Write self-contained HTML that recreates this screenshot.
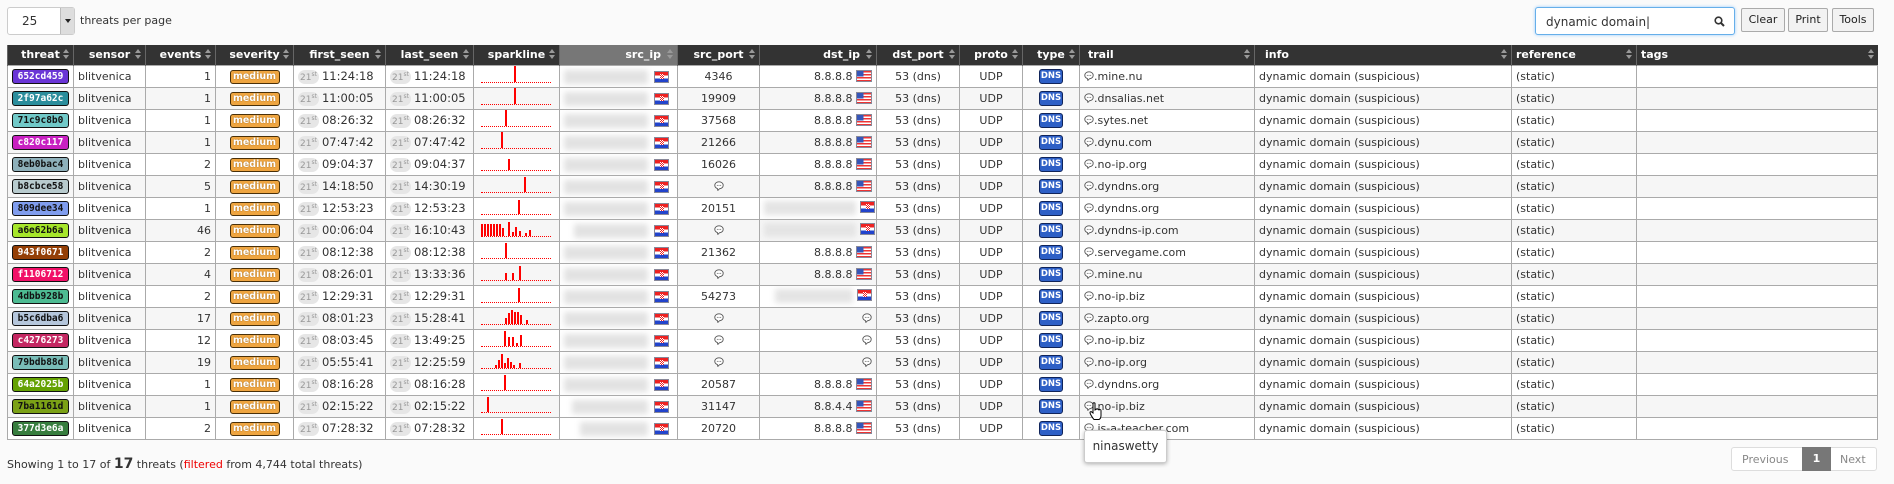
<!DOCTYPE html>
<html><head><meta charset="utf-8"><style>
*{box-sizing:border-box}
body{margin:0;width:1894px;height:484px;background:#fafafa;font-family:"DejaVu Sans","Liberation Sans",sans-serif;font-size:11px;color:#333;position:relative;overflow:hidden}
.sel{position:absolute;left:7px;top:7px;width:68px;height:28px;border:1px solid #ccc;border-radius:3px;background:#fff}
.sel span{position:absolute;left:14px;top:6px;font-size:12px}
.sel i{position:absolute;right:0;top:0;width:14px;height:26px;background:#ddd;border-left:1px solid #bbb}
.sel i:after{content:"";position:absolute;left:4px;top:11px;border:3px solid transparent;border-top:4px solid #222}
.tpp{position:absolute;left:80px;top:14px;font-size:11px}
.search{position:absolute;left:1535px;top:7px;width:200px;height:28px;border:1px solid #66afe9;border-radius:3px;background:#fff;box-shadow:0 0 3px #9cf}
.search span{position:absolute;left:10px;top:7px;font-size:12px;color:#333}
.btn{position:absolute;top:8px;height:24px;border:1px solid #aaa;border-radius:2px;background:#f2f2f2;font-size:11px;text-align:center;line-height:22px;color:#222}
table{position:absolute;left:7px;top:45px;border-collapse:collapse;table-layout:fixed;width:1870px}
th{background:#333;color:#fff;font-weight:bold;height:20px;padding:0 4px;font-size:11px;border-left:1px solid #666;position:relative;text-align:center;white-space:nowrap}
th .ar{position:absolute;right:3px;top:4px;width:7px;height:12px}
th .ar:before{content:"";position:absolute;left:0;top:0;border:3.5px solid transparent;border-bottom:4px solid #999;border-top:0}
th .ar:after{content:"";position:absolute;left:0;top:6px;border:3.5px solid transparent;border-top:4px solid #999;border-bottom:0}
th.l{text-align:left}th.r{text-align:right;padding-right:16px}
td{height:22px;border:1px solid #aaa;padding:0 4px;white-space:nowrap;overflow:hidden;font-size:11px;position:relative}
tr:nth-child(odd) td{background:#f6f6f6}tr:nth-child(even) td{background:#fff}
.c{text-align:center}.r{text-align:right}
.tm{font-size:11.5px}
.tb{display:inline-block;width:57px;height:15px;border:1px solid #111;border-radius:3px;font:bold 9.5px "DejaVu Sans Mono",monospace;line-height:13px;text-align:center;color:#fff}
.tb.d{color:#111}
.sv{display:inline-block;width:50px;height:14px;border:1px solid #4a3008;border-radius:3px;background:#efa540;color:#fff;font-size:9.5px;font-weight:bold;line-height:12px;text-shadow:0 0 1px #7a5010}
.dt{display:inline-block;background:#e6e6e6;color:#999;border-radius:7px;font-size:9px;padding:1px 2px;margin-right:3px}
.dt sup{font-size:6px}
.sp{position:absolute;left:7px;right:8px;bottom:4px;height:16px;border-bottom:1px dotted #f00}
.sp b{position:absolute;bottom:0;width:2px;background:#f00}
td.ip{background:#fff!important;padding:0}
.bl{position:absolute;left:4px;top:4px;width:84px;height:14px;background:#e2e2e2;filter:blur(3px)}
.hr{position:absolute;right:8px;top:5px;width:15px;height:12px;background:linear-gradient(#e22 0,#e22 33%,#fff 33%,#fff 66%,#24c 66%);border:1px solid #889}
.hr:after,.hf:after{content:"";position:absolute;left:5px;top:2px;width:4px;height:5px;background:repeating-conic-gradient(#e22 0 25%,#fff 0 50%) 0 0/2px 2px}
.us{display:inline-block;vertical-align:-2px;width:16px;height:12px;border:1px solid #889;background:linear-gradient(90deg,#3656b8 0,#3656b8 45%,transparent 45%) 0 0/100% 55% no-repeat,repeating-linear-gradient(#e33 0 1.5px,#fff 1.5px 3px)}
.hf{display:inline-block;position:relative;vertical-align:-2px;width:15px;height:12px;border:1px solid #889;background:linear-gradient(#e22 0,#e22 33%,#fff 33%,#fff 66%,#24c 66%)}
.dns{display:inline-block;width:24px;height:15px;background:#2d5fc6;border:1px solid #10245a;border-radius:3px;color:#fff;font-size:8.5px;font-weight:bold;line-height:13px;text-align:center}
.cm{display:inline-block;width:10px;height:10px;vertical-align:-1px}
.dbl{display:inline-block;width:92px;height:14px;background:#e4e4e4;filter:blur(3px);vertical-align:middle;margin-right:4px}
</style></head><body>
<div class="sel"><span>25</span><i></i></div>
<div class="tpp">threats per page</div>
<div class="search"><span>dynamic domain|</span><svg style="position:absolute;right:9px;top:8px" width="11" height="11" viewBox="0 0 11 11"><circle cx="4.5" cy="4.5" r="3.3" fill="none" stroke="#333" stroke-width="1.6"/><path d="M7 7l3 3" stroke="#333" stroke-width="2"/></svg></div>
<div class="btn" style="left:1741px;width:44px">Clear</div>
<div class="btn" style="left:1788px;width:40px">Print</div>
<div class="btn" style="left:1832px;width:42px">Tools</div>
<svg width="0" height="0" style="position:absolute"><defs><symbol id="cm" viewBox="0 0 10 10"><path d="M5 .8C2.6.8.8 2.3.8 4.3c0 1.6 1.1 2.8 2.6 3.3L3.9 9.4 5.4 7.8C7.6 7.7 9.2 6.2 9.2 4.3 9.2 2.3 7.4.8 5 .8z" fill="#fff" stroke="#555" stroke-width=".9"/><circle cx="3.3" cy="4.4" r=".5" fill="#555"/><circle cx="5" cy="4.4" r=".5" fill="#555"/><circle cx="6.7" cy="4.4" r=".5" fill="#555"/></symbol></defs></svg>
<table>
<colgroup><col style="width:66px"><col style="width:72px"><col style="width:70px"><col style="width:78px"><col style="width:92px"><col style="width:88px"><col style="width:86px"><col style="width:118px"><col style="width:82px"><col style="width:117px"><col style="width:83px"><col style="width:63px"><col style="width:57px"><col style="width:175px"><col style="width:257px"><col style="width:125px"><col style="width:241px"></colgroup>
<tr><th>threat<i class="ar"></i></th><th>sensor<i class="ar"></i></th><th>events<i class="ar"></i></th><th>severity<i class="ar"></i></th><th>first_seen<i class="ar"></i></th><th>last_seen<i class="ar"></i></th><th>sparkline<i class="ar"></i></th><th class="r" style="background:#777">src_ip<i class="ar"></i></th><th>src_port<i class="ar"></i></th><th class="r">dst_ip<i class="ar"></i></th><th>dst_port<i class="ar"></i></th><th>proto<i class="ar"></i></th><th>type<i class="ar"></i></th><th class="l" style="padding-left:8px">trail<i class="ar"></i></th><th class="l" style="padding-left:10px">info<i class="ar"></i></th><th class="l">reference<i class="ar"></i></th><th class="l">tags<i class="ar"></i></th></tr>
<tr><td class="c"><span class="tb" style="background:#6a35d6">652cd459</span></td><td>blitvenica</td><td class="r">1</td><td class="c"><span class="sv">medium</span></td><td class="tm"><span class="dt">21<sup>st</sup></span>11:24:18</td><td class="tm"><span class="dt">21<sup>st</sup></span>11:24:18</td><td><div class="sp"><b style="left:33px;height:16px"></b></div></td><td class="ip"><div class="bl"></div><div class="hr"></div></td><td class="c">4346</td><td class="r">8.8.8.8 <span class="us"></span></td><td class="c">53 (dns)</td><td class="c">UDP</td><td class="c"><span class="dns">DNS</span></td><td><svg class="cm"><use href="#cm"/></svg>.mine.nu</td><td>dynamic domain (suspicious)</td><td>(static)</td><td></td></tr>
<tr><td class="c"><span class="tb" style="background:#2a8d9c">2f97a62c</span></td><td>blitvenica</td><td class="r">1</td><td class="c"><span class="sv">medium</span></td><td class="tm"><span class="dt">21<sup>st</sup></span>11:00:05</td><td class="tm"><span class="dt">21<sup>st</sup></span>11:00:05</td><td><div class="sp"><b style="left:33px;height:16px"></b></div></td><td class="ip"><div class="bl"></div><div class="hr"></div></td><td class="c">19909</td><td class="r">8.8.8.8 <span class="us"></span></td><td class="c">53 (dns)</td><td class="c">UDP</td><td class="c"><span class="dns">DNS</span></td><td><svg class="cm"><use href="#cm"/></svg>.dnsalias.net</td><td>dynamic domain (suspicious)</td><td>(static)</td><td></td></tr>
<tr><td class="c"><span class="tb d" style="background:#71c9c8">71c9c8b0</span></td><td>blitvenica</td><td class="r">1</td><td class="c"><span class="sv">medium</span></td><td class="tm"><span class="dt">21<sup>st</sup></span>08:26:32</td><td class="tm"><span class="dt">21<sup>st</sup></span>08:26:32</td><td><div class="sp"><b style="left:24px;height:16px"></b></div></td><td class="ip"><div class="bl"></div><div class="hr"></div></td><td class="c">37568</td><td class="r">8.8.8.8 <span class="us"></span></td><td class="c">53 (dns)</td><td class="c">UDP</td><td class="c"><span class="dns">DNS</span></td><td><svg class="cm"><use href="#cm"/></svg>.sytes.net</td><td>dynamic domain (suspicious)</td><td>(static)</td><td></td></tr>
<tr><td class="c"><span class="tb" style="background:#c820c1">c820c117</span></td><td>blitvenica</td><td class="r">1</td><td class="c"><span class="sv">medium</span></td><td class="tm"><span class="dt">21<sup>st</sup></span>07:47:42</td><td class="tm"><span class="dt">21<sup>st</sup></span>07:47:42</td><td><div class="sp"><b style="left:20px;height:16px"></b></div></td><td class="ip"><div class="bl"></div><div class="hr"></div></td><td class="c">21266</td><td class="r">8.8.8.8 <span class="us"></span></td><td class="c">53 (dns)</td><td class="c">UDP</td><td class="c"><span class="dns">DNS</span></td><td><svg class="cm"><use href="#cm"/></svg>.dynu.com</td><td>dynamic domain (suspicious)</td><td>(static)</td><td></td></tr>
<tr><td class="c"><span class="tb d" style="background:#8eb0ba">8eb0bac4</span></td><td>blitvenica</td><td class="r">2</td><td class="c"><span class="sv">medium</span></td><td class="tm"><span class="dt">21<sup>st</sup></span>09:04:37</td><td class="tm"><span class="dt">21<sup>st</sup></span>09:04:37</td><td><div class="sp"><b style="left:27px;height:11px"></b></div></td><td class="ip"><div class="bl"></div><div class="hr"></div></td><td class="c">16026</td><td class="r">8.8.8.8 <span class="us"></span></td><td class="c">53 (dns)</td><td class="c">UDP</td><td class="c"><span class="dns">DNS</span></td><td><svg class="cm"><use href="#cm"/></svg>.no-ip.org</td><td>dynamic domain (suspicious)</td><td>(static)</td><td></td></tr>
<tr><td class="c"><span class="tb d" style="background:#b8cbce">b8cbce58</span></td><td>blitvenica</td><td class="r">5</td><td class="c"><span class="sv">medium</span></td><td class="tm"><span class="dt">21<sup>st</sup></span>14:18:50</td><td class="tm"><span class="dt">21<sup>st</sup></span>14:30:19</td><td><div class="sp"><b style="left:43px;height:15px"></b></div></td><td class="ip"><div class="bl"></div><div class="hr"></div></td><td class="c"><svg class="cm"><use href="#cm"/></svg></td><td class="r">8.8.8.8 <span class="us"></span></td><td class="c">53 (dns)</td><td class="c">UDP</td><td class="c"><span class="dns">DNS</span></td><td><svg class="cm"><use href="#cm"/></svg>.dyndns.org</td><td>dynamic domain (suspicious)</td><td>(static)</td><td></td></tr>
<tr><td class="c"><span class="tb d" style="background:#809dee">809dee34</span></td><td>blitvenica</td><td class="r">1</td><td class="c"><span class="sv">medium</span></td><td class="tm"><span class="dt">21<sup>st</sup></span>12:53:23</td><td class="tm"><span class="dt">21<sup>st</sup></span>12:53:23</td><td><div class="sp"><b style="left:37px;height:14px"></b></div></td><td class="ip"><div class="bl"></div><div class="hr"></div></td><td class="c">20151</td><td class="r"><span class="dbl"></span><span class="hf"></span></td><td class="c">53 (dns)</td><td class="c">UDP</td><td class="c"><span class="dns">DNS</span></td><td><svg class="cm"><use href="#cm"/></svg>.dyndns.org</td><td>dynamic domain (suspicious)</td><td>(static)</td><td></td></tr>
<tr><td class="c"><span class="tb d" style="background:#a6e62b">a6e62b6a</span></td><td>blitvenica</td><td class="r">46</td><td class="c"><span class="sv">medium</span></td><td class="tm"><span class="dt">21<sup>st</sup></span>00:06:04</td><td class="tm"><span class="dt">21<sup>st</sup></span>16:10:43</td><td><div class="sp"><b style="left:0;height:12px"></b><b style="left:3px;height:12px"></b><b style="left:6px;height:12px"></b><b style="left:9px;height:12px"></b><b style="left:12px;height:12px"></b><b style="left:15px;height:12px"></b><b style="left:18px;height:12px"></b><b style="left:21px;height:8px"></b><b style="left:27px;height:14px"></b><b style="left:31px;height:4px"></b><b style="left:34px;height:9px"></b><b style="left:38px;height:5px"></b><b style="left:44px;height:3px"></b><b style="left:48px;height:6px"></b></div></td><td class="ip"><div class="bl" style="left:14px;width:74px"></div><div class="hr"></div></td><td class="c"><svg class="cm"><use href="#cm"/></svg></td><td class="r"><span class="dbl"></span><span class="hf"></span></td><td class="c">53 (dns)</td><td class="c">UDP</td><td class="c"><span class="dns">DNS</span></td><td><svg class="cm"><use href="#cm"/></svg>.dyndns-ip.com</td><td>dynamic domain (suspicious)</td><td>(static)</td><td></td></tr>
<tr><td class="c"><span class="tb" style="background:#943f06">943f0671</span></td><td>blitvenica</td><td class="r">2</td><td class="c"><span class="sv">medium</span></td><td class="tm"><span class="dt">21<sup>st</sup></span>08:12:38</td><td class="tm"><span class="dt">21<sup>st</sup></span>08:12:38</td><td><div class="sp"><b style="left:24px;height:15px"></b></div></td><td class="ip"><div class="bl"></div><div class="hr"></div></td><td class="c">21362</td><td class="r">8.8.8.8 <span class="us"></span></td><td class="c">53 (dns)</td><td class="c">UDP</td><td class="c"><span class="dns">DNS</span></td><td><svg class="cm"><use href="#cm"/></svg>.servegame.com</td><td>dynamic domain (suspicious)</td><td>(static)</td><td></td></tr>
<tr><td class="c"><span class="tb" style="background:#f11067">f1106712</span></td><td>blitvenica</td><td class="r">4</td><td class="c"><span class="sv">medium</span></td><td class="tm"><span class="dt">21<sup>st</sup></span>08:26:01</td><td class="tm"><span class="dt">21<sup>st</sup></span>13:33:36</td><td><div class="sp"><b style="left:24px;height:7px"></b><b style="left:31px;height:7px"></b><b style="left:38px;height:14px"></b></div></td><td class="ip"><div class="bl"></div><div class="hr"></div></td><td class="c"><svg class="cm"><use href="#cm"/></svg></td><td class="r">8.8.8.8 <span class="us"></span></td><td class="c">53 (dns)</td><td class="c">UDP</td><td class="c"><span class="dns">DNS</span></td><td><svg class="cm"><use href="#cm"/></svg>.mine.nu</td><td>dynamic domain (suspicious)</td><td>(static)</td><td></td></tr>
<tr><td class="c"><span class="tb d" style="background:#4dbb92">4dbb928b</span></td><td>blitvenica</td><td class="r">2</td><td class="c"><span class="sv">medium</span></td><td class="tm"><span class="dt">21<sup>st</sup></span>12:29:31</td><td class="tm"><span class="dt">21<sup>st</sup></span>12:29:31</td><td><div class="sp"><b style="left:37px;height:14px"></b></div></td><td class="ip"><div class="bl"></div><div class="hr"></div></td><td class="c">54273</td><td class="r"><span class="dbl" style="width:78px"></span><span class="hf"></span></td><td class="c">53 (dns)</td><td class="c">UDP</td><td class="c"><span class="dns">DNS</span></td><td><svg class="cm"><use href="#cm"/></svg>.no-ip.biz</td><td>dynamic domain (suspicious)</td><td>(static)</td><td></td></tr>
<tr><td class="c"><span class="tb d" style="background:#b5c6db">b5c6dba6</span></td><td>blitvenica</td><td class="r">17</td><td class="c"><span class="sv">medium</span></td><td class="tm"><span class="dt">21<sup>st</sup></span>08:01:23</td><td class="tm"><span class="dt">21<sup>st</sup></span>15:28:41</td><td><div class="sp"><b style="left:24px;height:6px"></b><b style="left:27px;height:11px"></b><b style="left:30px;height:14px"></b><b style="left:33px;height:12px"></b><b style="left:36px;height:12px"></b><b style="left:39px;height:9px"></b><b style="left:45px;height:4px"></b></div></td><td class="ip"><div class="bl"></div><div class="hr"></div></td><td class="c"><svg class="cm"><use href="#cm"/></svg></td><td class="r"><svg class="cm"><use href="#cm"/></svg></td><td class="c">53 (dns)</td><td class="c">UDP</td><td class="c"><span class="dns">DNS</span></td><td><svg class="cm"><use href="#cm"/></svg>.zapto.org</td><td>dynamic domain (suspicious)</td><td>(static)</td><td></td></tr>
<tr><td class="c"><span class="tb" style="background:#c42762">c4276273</span></td><td>blitvenica</td><td class="r">12</td><td class="c"><span class="sv">medium</span></td><td class="tm"><span class="dt">21<sup>st</sup></span>08:03:45</td><td class="tm"><span class="dt">21<sup>st</sup></span>13:49:25</td><td><div class="sp"><b style="left:23px;height:15px"></b><b style="left:27px;height:9px"></b><b style="left:31px;height:9px"></b><b style="left:35px;height:3px"></b><b style="left:39px;height:11px"></b></div></td><td class="ip"><div class="bl"></div><div class="hr"></div></td><td class="c"><svg class="cm"><use href="#cm"/></svg></td><td class="r"><svg class="cm"><use href="#cm"/></svg></td><td class="c">53 (dns)</td><td class="c">UDP</td><td class="c"><span class="dns">DNS</span></td><td><svg class="cm"><use href="#cm"/></svg>.no-ip.biz</td><td>dynamic domain (suspicious)</td><td>(static)</td><td></td></tr>
<tr><td class="c"><span class="tb d" style="background:#79bdb8">79bdb88d</span></td><td>blitvenica</td><td class="r">19</td><td class="c"><span class="sv">medium</span></td><td class="tm"><span class="dt">21<sup>st</sup></span>05:55:41</td><td class="tm"><span class="dt">21<sup>st</sup></span>12:25:59</td><td><div class="sp"><b style="left:14px;height:3px"></b><b style="left:17px;height:8px"></b><b style="left:20px;height:14px"></b><b style="left:23px;height:5px"></b><b style="left:26px;height:10px"></b><b style="left:29px;height:6px"></b><b style="left:32px;height:3px"></b><b style="left:38px;height:5px"></b></div></td><td class="ip"><div class="bl"></div><div class="hr"></div></td><td class="c"><svg class="cm"><use href="#cm"/></svg></td><td class="r"><svg class="cm"><use href="#cm"/></svg></td><td class="c">53 (dns)</td><td class="c">UDP</td><td class="c"><span class="dns">DNS</span></td><td><svg class="cm"><use href="#cm"/></svg>.no-ip.org</td><td>dynamic domain (suspicious)</td><td>(static)</td><td></td></tr>
<tr><td class="c"><span class="tb" style="background:#64a202">64a2025b</span></td><td>blitvenica</td><td class="r">1</td><td class="c"><span class="sv">medium</span></td><td class="tm"><span class="dt">21<sup>st</sup></span>08:16:28</td><td class="tm"><span class="dt">21<sup>st</sup></span>08:16:28</td><td><div class="sp"><b style="left:23px;height:15px"></b></div></td><td class="ip"><div class="bl"></div><div class="hr"></div></td><td class="c">20587</td><td class="r">8.8.8.8 <span class="us"></span></td><td class="c">53 (dns)</td><td class="c">UDP</td><td class="c"><span class="dns">DNS</span></td><td><svg class="cm"><use href="#cm"/></svg>.dyndns.org</td><td>dynamic domain (suspicious)</td><td>(static)</td><td></td></tr>
<tr><td class="c"><span class="tb d" style="background:#7ba116">7ba1161d</span></td><td>blitvenica</td><td class="r">1</td><td class="c"><span class="sv">medium</span></td><td class="tm"><span class="dt">21<sup>st</sup></span>02:15:22</td><td class="tm"><span class="dt">21<sup>st</sup></span>02:15:22</td><td><div class="sp"><b style="left:6px;height:15px"></b></div></td><td class="ip"><div class="bl" style="left:12px;width:76px"></div><div class="hr"></div></td><td class="c">31147</td><td class="r">8.8.4.4 <span class="us"></span></td><td class="c">53 (dns)</td><td class="c">UDP</td><td class="c"><span class="dns">DNS</span></td><td><svg class="cm"><use href="#cm"/></svg>.no-ip.biz</td><td>dynamic domain (suspicious)</td><td>(static)</td><td></td></tr>
<tr><td class="c"><span class="tb" style="background:#377d3e">377d3e6a</span></td><td>blitvenica</td><td class="r">2</td><td class="c"><span class="sv">medium</span></td><td class="tm"><span class="dt">21<sup>st</sup></span>07:28:32</td><td class="tm"><span class="dt">21<sup>st</sup></span>07:28:32</td><td><div class="sp"><b style="left:20px;height:15px"></b></div></td><td class="ip"><div class="bl" style="left:20px;width:68px"></div><div class="hr"></div></td><td class="c">20720</td><td class="r">8.8.8.8 <span class="us"></span></td><td class="c">53 (dns)</td><td class="c">UDP</td><td class="c"><span class="dns">DNS</span></td><td><svg class="cm"><use href="#cm"/></svg>.is-a-teacher.com</td><td>dynamic domain (suspicious)</td><td>(static)</td><td></td></tr>
</table>
<div style="position:absolute;left:7px;top:456px;font-size:11px">Showing 1 to 17 of <b style="font-size:14px">17</b> threats (<span style="color:#e00">filtered</span> from 4,744 total threats)</div>
<div style="position:absolute;left:1731px;top:447px;width:146px;height:24px;border:1px solid #ddd;border-radius:3px;background:#fff;font-size:11px;color:#888">
<span style="position:absolute;left:10px;top:5px">Previous</span>
<span style="position:absolute;left:70px;top:-1px;width:29px;height:24px;background:#777;color:#fff;text-align:center;line-height:24px;font-weight:bold">1</span>
<span style="position:absolute;left:108px;top:5px">Next</span></div>
<div style="position:absolute;left:1084px;top:430px;width:83px;height:33px;background:#fff;border:1px solid #ccc;border-radius:3px;box-shadow:0 1px 4px rgba(0,0,0,.3);font-size:12px;line-height:31px;text-align:center;color:#333">ninaswetty</div>
<svg style="position:absolute;left:1089px;top:402px" width="14" height="18" viewBox="0 0 14 18"><path d="M4 1.5c0-1 2-1 2 0V8l1-.5c.5-1 2-1 2 0l1 .5c.5-.8 2-.5 2 .5v5c0 2-1 3.5-2 4H5C4 16.5 1 12 1 10.5c0-.8 1-1.2 2-.3L4 11z" fill="#fff" stroke="#000" stroke-width="1"/></svg>
</body></html>
